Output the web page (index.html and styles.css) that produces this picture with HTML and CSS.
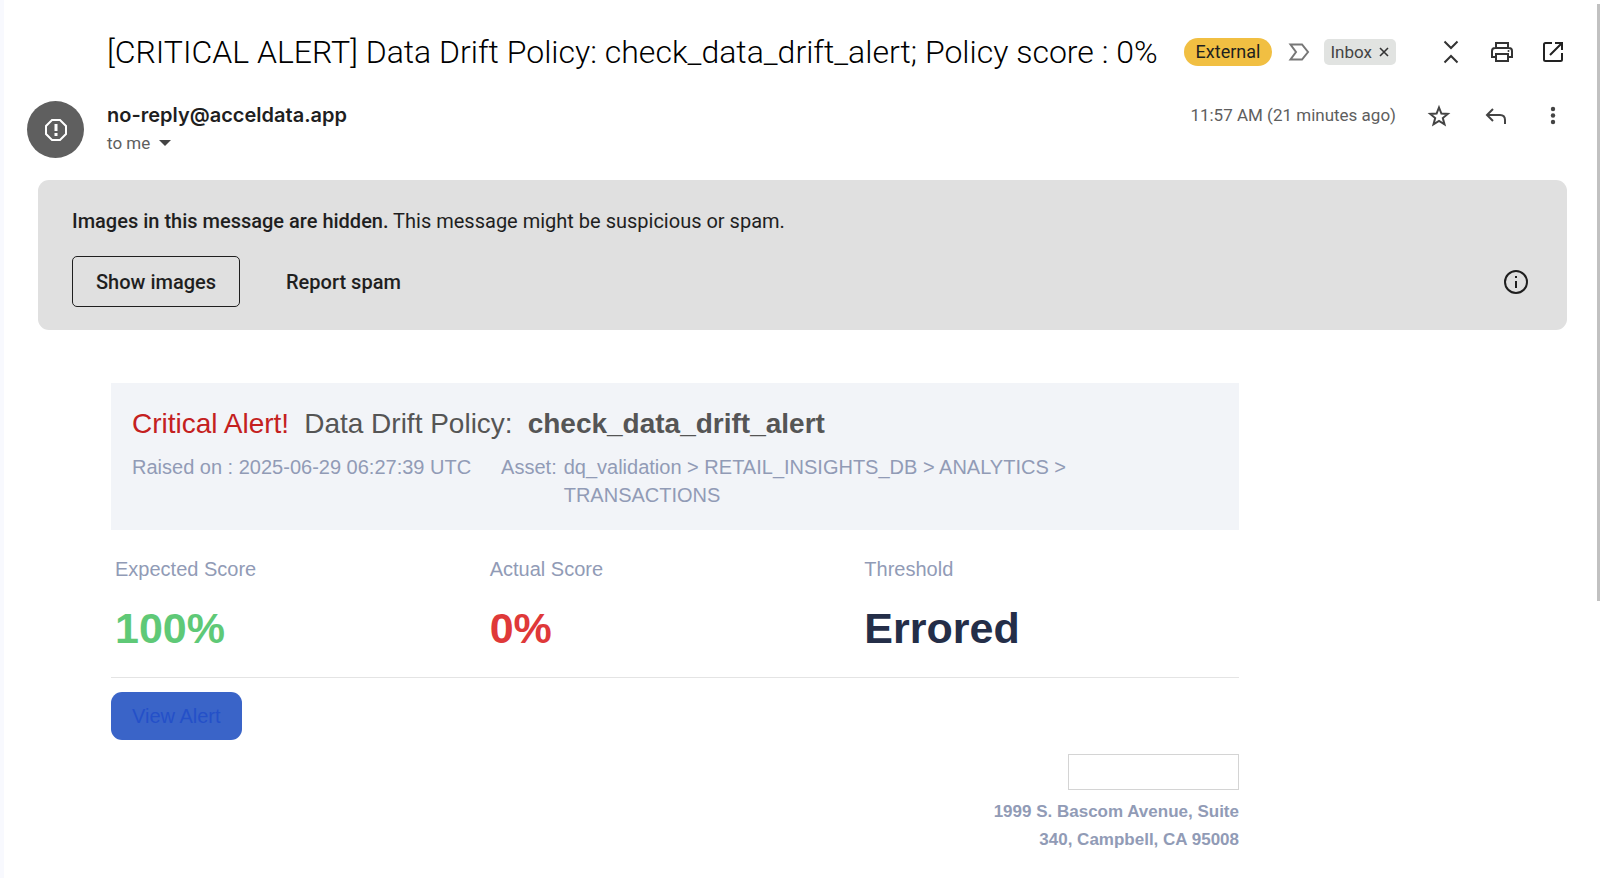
FILE: index.html
```html
<!DOCTYPE html>
<html lang="en">
<head>
    <meta charset="UTF-8">
    <meta name="viewport" content="width=device-width, initial-scale=1.0">
    <title>Data Drift Policy: check_data_drift_alert</title>
    <link rel="stylesheet" href="styles.css">
</head>
<body>
    <main class="mail">
        <!-- subject -->
        <header class="subject">
            <h1>[CRITICAL ALERT] Data Drift Policy: check_data_drift_alert; Policy score : 0%</h1>
            <span class="external">External</span>
            <button class="icon marker" type="button" aria-label="Important">
                <svg width="22" height="18" viewBox="0 0 22 18"><path d="M2.500 1.500H14L20 9l-6 7.500H2.500L8 9z" fill="none" stroke="#777" stroke-width="2"/></svg>
            </button>
            <span class="inbox">Inbox
                <button type="button" aria-label="Remove label Inbox">
                    <svg width="10" height="10" viewBox="0 0 10 10"><path d="M1 1l8 8M9 1L1 9" stroke="#333" stroke-width="1.600"/></svg>
                </button>
            </span>
            <div class="tools">
                <button class="icon" type="button" aria-label="Collapse all">
                    <svg width="28" height="28" viewBox="0 0 28 28"><path d="M7.500 3.500l6.500 6.500 6.500-6.500M7.500 24.500L14 18l6.500 6.500" fill="none" stroke="#333" stroke-width="2"/></svg>
                </button>
                <button class="icon" type="button" aria-label="Print all">
                    <svg width="28" height="28" viewBox="0 0 28 28"><g fill="none" stroke="#333" stroke-width="2"><path d="M8 10V5h12v5M8 19H4v-6q0-3 3-3h14q3 0 3 3v6h-4"/><path d="M8 16h12v7H8z"/></g><circle cx="20.500" cy="13" r="1" fill="#333"/></svg>
                </button>
                <button class="icon" type="button" aria-label="In new window">
                    <svg width="28" height="28" viewBox="0 0 28 28"><path d="M13 5H6.500Q5 5 5 6.500v15Q5 23 6.500 23h15q1.500 0 1.500-1.500V15M16 5h7v7M23 5L11 17" fill="none" stroke="#222" stroke-width="2"/></svg>
                </button>
            </div>
        </header>

        <!-- sender -->
        <section class="sender">
            <div class="avatar">
                <svg width="24" height="24" viewBox="0 0 24 24"><path d="M8 2h8l6 6v8l-6 6H8l-6-6V8z" fill="none" stroke="#fff" stroke-width="2"/><path d="M12 6v7M12 15v3" stroke="#fff" stroke-width="3"/></svg>
            </div>
            <div class="from">
                <h2>no-reply@acceldata.app</h2>
                <button class="to" type="button">to me
                    <svg width="12" height="6" viewBox="0 0 12 6"><path d="M0 0h12L6 6z" fill="#444"/></svg>
                </button>
            </div>
            <span class="time">11:57 AM (21 minutes ago)</span>
            <div class="tools">
                <button class="icon" type="button" aria-label="Star">
                    <svg width="28" height="28" viewBox="0 0 28 28"><path d="M14 6.500l2.400 6 6.400.4-5 4.100 1.700 6.300L14 19.900l-5.500 3.400 1.700-6.300-5-4.100 6.400-.4z" fill="none" stroke="#444" stroke-width="2"/></svg>
                </button>
                <button class="icon" type="button" aria-label="Reply">
                    <svg width="28" height="28" viewBox="0 0 28 28"><path d="M11 8l-6 6 6 6M5 14h13q5 0 5 5v4" fill="none" stroke="#444" stroke-width="2"/></svg>
                </button>
                <button class="icon" type="button" aria-label="More">
                    <svg width="28" height="28" viewBox="0 0 28 28" fill="#444"><circle cx="14" cy="8" r="2.200"/><circle cx="14" cy="14.500" r="2.200"/><circle cx="14" cy="21" r="2.200"/></svg>
                </button>
            </div>
        </section>

        <!-- warning -->
        <section class="banner">
            <p><b>Images in this message are hidden.</b> This message might be suspicious or spam.</p>
            <div class="actions">
                <button class="btn outlined" type="button">Show images</button>
                <button class="btn" type="button">Report spam</button>
                <button class="icon info" type="button" aria-label="More information">
                    <svg width="28" height="28" viewBox="0 0 28 28"><circle cx="14" cy="14" r="11" fill="none" stroke="#1f1f1f" stroke-width="2"/><path d="M14 13v7M14 8v2" stroke="#1f1f1f" stroke-width="2"/></svg>
                </button>
            </div>
        </section>

        <!-- message body -->
        <article class="message">
            <div class="alert">
                <h3><span class="critical">Critical Alert!</span> <span>Data Drift Policy:</span> <b>check_data_drift_alert</b></h3>
                <div class="meta">
                    <span>Raised on : 2025-06-29 06:27:39 UTC</span>
                    <span class="label">Asset:</span>
                    <span class="asset">dq_validation &gt; RETAIL_INSIGHTS_DB &gt; ANALYTICS &gt; TRANSACTIONS</span>
                </div>
            </div>
            <dl class="scores">
                <div>
                    <dt>Expected Score</dt>
                    <dd class="green">100%</dd>
                </div>
                <div>
                    <dt>Actual Score</dt>
                    <dd class="red">0%</dd>
                </div>
                <div>
                    <dt>Threshold</dt>
                    <dd>Errored</dd>
                </div>
            </dl>
            <a class="view" href="#">View Alert</a>
            <footer>
                <div class="logo"></div>
                <address>1999 S. Bascom Avenue, Suite 340, Campbell, CA 95008</address>
            </footer>
        </article>
    </main>
    <div class="scrollbar"></div>
</body>
</html>
```
FILE: styles.css
```css
*{
    margin: 0;
    padding: 0;
    box-sizing: border-box;
}
body{
    min-height: 100vh;
    border-left: 4px solid #f8f9fe;
    background-color: #fff;
    color: #1f1f1f;
    font-family: Roboto, "Open Sans", sans-serif;
}
button{
    border: 0;
    background: none;
    color: inherit;
    font: inherit;
    cursor: pointer;
}
svg{
    display: block;
}
.mail{
    padding: 32px 33px 24px 34px;
}

/* subject */
.subject{
    display: flex;
    align-items: center;
    height: 40px;
    padding-left: 69px;
}
.subject h1{
    color: #000;
    font-size: 32px;
    font-weight: 300;
    line-height: 40px;
    white-space: nowrap;
}
.external{
    height: 28px;
    margin-left: 26px;
    padding: 0 12px;
    border-radius: 14px;
    background-color: #f1bf42;
    font-size: 18px;
    line-height: 28px;
}
.marker{
    margin: 0 14px 0 16px;
}
.inbox{
    display: flex;
    align-items: center;
    gap: 7px;
    height: 26px;
    padding: 0 7px 0 6px;
    border-radius: 5px;
    background-color: #e1e3e1;
    color: #444;
    font-size: 17px;
}
.tools{
    display: flex;
    gap: 23px;
    margin-left: auto;
}

/* sender */
.sender{
    display: flex;
    align-items: flex-start;
    margin: 29px 0 0 -11px;
}
.avatar{
    display: flex;
    align-items: center;
    justify-content: center;
    width: 57px;
    height: 57px;
    border-radius: 50%;
    background-color: #5f5f5f;
}
.from{
    margin-left: 23px;
}
.from h2{
    font-family: Inter, sans-serif;
    font-size: 20px;
    font-weight: 600;
    line-height: 28px;
}
.to{
    display: flex;
    align-items: center;
    gap: 9px;
    color: #5e5e5e;
    font-size: 17px;
    line-height: 28px;
}
.time{
    margin-left: auto;
    color: #5e5e5e;
    font-size: 17px;
    line-height: 28px;
}
.sender .tools{
    gap: 29px;
    margin-left: 29px;
}

/* warning */
.banner{
    margin-top: 22px;
    padding: 27px 37px 23px 34px;
    border-radius: 11px;
    background-color: #e0e0e0;
    font-size: 20px;
    line-height: 28px;
}
.banner b{
    font-weight: 500;
}
.actions{
    display: flex;
    align-items: center;
    gap: 22px;
    margin-top: 21px;
}
.btn{
    height: 51px;
    padding: 0 23px;
    border: 1px solid transparent;
    border-radius: 5px;
    font-weight: 500;
}
.outlined{
    border-color: #1f1f1f;
}
.info{
    margin-left: auto;
}

/* message body */
.message{
    max-width: 1128px;
    margin: 53px 0 0 73px;
    font-family: "Liberation Sans", Arial, sans-serif;
}
.alert{
    height: 147px;
    padding: 22px 21px;
    background-color: #f2f4f8;
}
.alert h3{
    display: flex;
    gap: 15px;
    color: #555;
    font-size: 28px;
    font-weight: 400;
    line-height: 38px;
}
.alert .critical{
    color: #c42020;
}
.meta{
    display: flex;
    margin-top: 10px;
    color: #919bb6;
    font-size: 20px;
    line-height: 28px;
}
.meta .label{
    margin: 0 7px 0 30px;
}
.asset{
    max-width: 520px;
}
.scores{
    display: grid;
    grid-template-columns: repeat(3, 1fr);
    height: 148px;
    padding: 25px 0 0 4px;
    border-bottom: 1px solid #e4e4e4;
}
.scores dt{
    color: #919bb6;
    font-size: 20px;
    line-height: 28px;
}
.scores dd{
    margin-top: 20px;
    color: #242e48;
    font-size: 43px;
    font-weight: 700;
    line-height: 50px;
}
.scores .green{
    color: #5fc977;
}
.scores .red{
    color: #df3939;
}
.view{
    display: inline-block;
    margin-top: 14px;
    padding: 0 21px;
    border-radius: 11px;
    background-color: #3a64c8;
    color: #2450c8;
    font-size: 20px;
    line-height: 48px;
    text-decoration: none;
}
footer{
    display: flex;
    flex-direction: column;
    align-items: flex-end;
    margin-top: 14px;
}
.logo{
    width: 171px;
    height: 36px;
    border: 1px solid #d4d4d4;
}
address{
    max-width: 260px;
    margin-top: 8px;
    color: #919bb6;
    font-size: 17px;
    font-style: normal;
    font-weight: 700;
    line-height: 28px;
    text-align: right;
}

/* overlay scrollbar */
.scrollbar{
    position: absolute;
    top: 4px;
    right: 0;
    width: 3px;
    height: 68%;
    background-color: #c1c1c1;
}
```
